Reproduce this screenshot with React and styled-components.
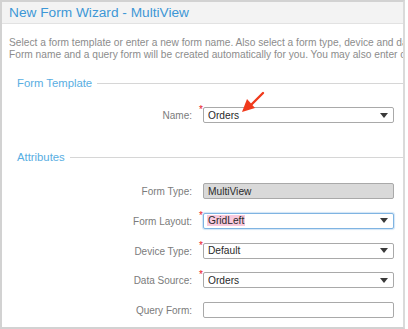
import React from "react";
import styled, { createGlobalStyle } from "styled-components";

const GlobalStyle = createGlobalStyle`
  html, body {
    margin: 0;
    padding: 0;
    background: #fff;
  }
  body {
    font-family: "Liberation Sans", Arial, sans-serif;
  }
`;

const Frame = styled.div`
  width: 401px;
  height: 325px;
  border: 2px solid #d2d2d2;
  border-right-color: #dadada;
  overflow: hidden;
  display: flex;
  flex-direction: column;
  background: #fff;
  position: relative;
`;

const Header = styled.div`
  height: 21px;
  flex: none;
  background: #f3f3f3;
  border-bottom: 1px solid #e2e2e2;
  padding-left: 7px;
  display: flex;
  align-items: center;
  color: #3d97d6;
  font-size: 13.7px;
`;

const Intro = styled.div`
  padding: 13px 0 0 7px;
  color: #8c8c8c;
  font-size: 10.2px;
  line-height: 12px;

  p {
    margin: 0;
    white-space: nowrap;
  }
`;

const Section = styled.div`
  margin-top: ${p => p.$top}px;
`;

const Legend = styled.div`
  display: flex;
  align-items: center;
  gap: 5px;
  padding-left: 15px;
  color: #58aee2;
  font-size: 11.3px;
  line-height: 16px;

  &::after {
    content: "";
    flex: 1;
    height: 1px;
    background: #d6d6d6;
    margin-top: 1px;
  }
`;

const Rows = styled.div`
  display: grid;
  grid-template-columns: 190px 11px 191px;
  grid-auto-rows: 16px;
  row-gap: ${p => p.$gap}px;
  margin-top: ${p => p.$top}px;
  align-items: center;
`;

const Label = styled.div`
  text-align: right;
  color: #7b7b7b;
  font-size: 10px;
  padding-top: 1px;
`;

const Req = styled.div`
  color: #e8141c;
  font-size: 10px;
  line-height: 10px;
  align-self: start;
  padding-left: 7px;
  margin-top: -2px;
`;

const Field = styled.div`
  height: 14px;
  border: 1px solid ${p => (p.$focus ? "#7fb4e2" : "#a9a9a9")};
  box-shadow: ${p => (p.$focus ? "0 0 1px 1px #d3e5f5" : "none")};
  border-radius: 2px;
  background: ${p => (p.$disabled ? "#d9d9d9" : "#fff")};
  display: flex;
  align-items: center;
  padding: 0 5px 0 3px;
  font-size: 10.2px;
  color: #2a2a2a;
`;

const Value = styled.span`
  flex: 1;
  span {
    background: ${p => (p.$mark ? "#f8c9dd" : "transparent")};
    padding: 0 1px;
  }
`;

const Caret = styled.span`
  width: 0;
  height: 0;
  border-left: 4px solid transparent;
  border-right: 4px solid transparent;
  border-top: 5px solid #3a3a3a;
`;

const Pointer = styled.svg`
  position: absolute;
  left: 234px;
  top: 83px;
`;

const Row = ({ label, required, value, select, disabled, focus, mark }) => (
  <>
    <Label>{label}</Label>
    <Req>{required ? "*" : ""}</Req>
    <Field $disabled={disabled} $focus={focus}>
      <Value $mark={mark}>
        <span>{value}</span>
      </Value>
      {select && <Caret />}
    </Field>
  </>
);

export default function App() {
  return (
    <>
      <GlobalStyle />
      <Frame>
        <Header>New Form Wizard - MultiView</Header>
        <Intro>
          <p>
            Select a form template or enter a new form name. Also select a form
            type, device and data source.
          </p>
          <p>
            Form name and a query form will be created automatically for you.
            You may also enter custom names.
          </p>
        </Intro>
        <Section $top={14}>
          <Legend>Form Template</Legend>
          <Rows $top={16} $gap={0}>
            <Row label="Name:" required value="Orders" select />
          </Rows>
        </Section>
        <Section $top={26}>
          <Legend>Attributes</Legend>
          <Rows $top={18} $gap={13.8}>
            <Row label="Form Type:" value="MultiView" disabled />
            <Row label="Form Layout:" required value="GridLeft" select focus mark />
            <Row label="Device Type:" required value="Default" select />
            <Row label="Data Source:" required value="Orders" select />
            <Row label="Query Form:" value="" />
          </Rows>
        </Section>
        <Pointer width="34" height="34" viewBox="0 0 34 34">
          <line x1="27" y1="8" x2="14" y2="21" stroke="#f03a1c" strokeWidth="2.4" strokeLinecap="round" />
          <polygon points="6,27 19,23 11,14" fill="#f03a1c" />
        </Pointer>
      </Frame>
    </>
  );
}
